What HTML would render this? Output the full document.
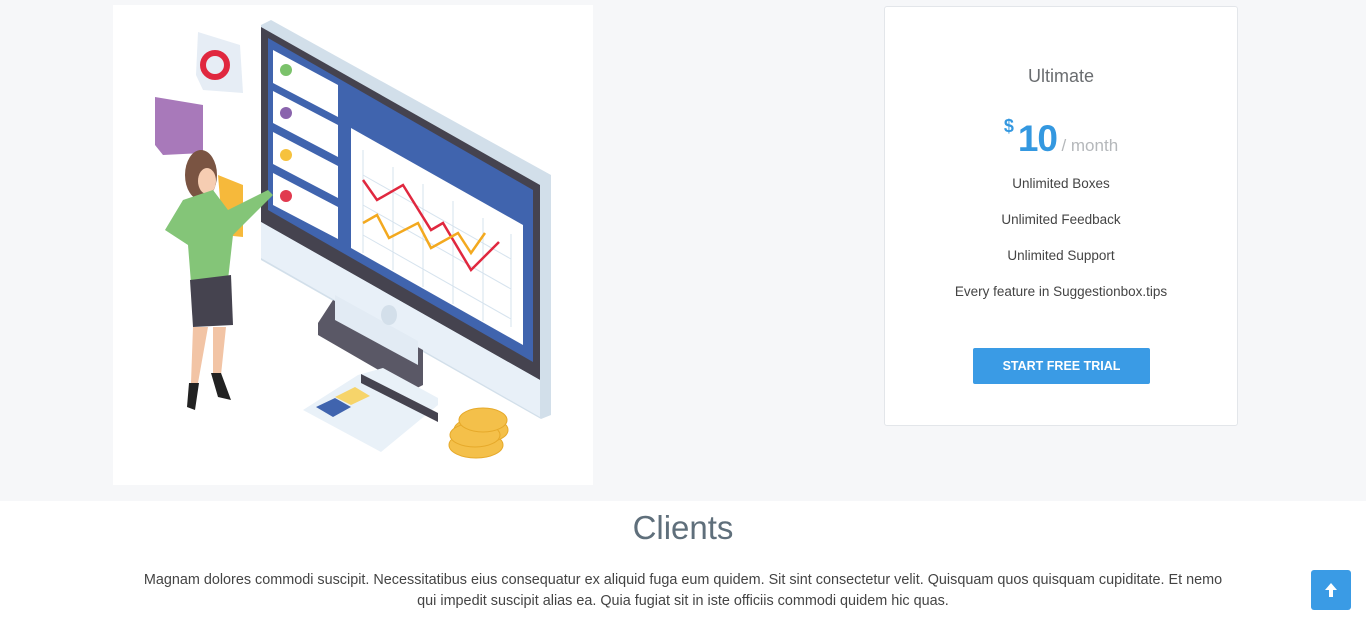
<!DOCTYPE html>
<html><head><style>
body{margin:0;width:1366px;height:625px;overflow:hidden;font-family:"Liberation Sans",sans-serif;background:#fff;position:relative}
.top{position:absolute;left:0;top:0;width:1366px;height:501px;background:#f6f7f9}
.img{position:absolute;left:113px;top:5px;width:480px;height:480px;background:#fff}
.card{position:absolute;left:884px;top:6px;width:352px;height:418px;background:#fff;border:1px solid #e3e6ea;border-radius:3px;text-align:center;color:#444}
.card h3{margin:0;position:absolute;top:59px;width:100%;font-weight:normal;font-size:18px;color:#6a6d70}
.price{position:absolute;top:111px;width:100%;color:#3498e0;font-weight:bold}
.price .d{font-size:18px;vertical-align:top;position:relative;top:-2px;margin-right:4px}
.price .n{font-size:37px;letter-spacing:-1px}
.price .m{font-size:17px;color:#b5b8bb;font-weight:normal}
.f{position:absolute;width:100%;font-size:13.5px;color:#444}
.btn{position:absolute;left:88px;top:341px;width:177px;height:36px;background:#3a9be5;border-radius:2px;color:#fff;font-weight:bold;font-size:12.5px;line-height:36px}
h2{position:absolute;top:509px;width:100%;margin:0;text-align:center;font-weight:normal;font-size:33px;color:#5f6f7b}
p{position:absolute;left:80px;width:1206px;top:570px;margin:0;text-align:center;font-size:14.4px;line-height:21px;color:#444}
.up{position:absolute;left:1311px;top:570px;width:40px;height:40px;background:#3a9be5;border-radius:3px}
</style></head><body>
<div class="top"></div>
<div class="img"><svg width="480" height="480" viewBox="0 0 480 480">
<polygon points="158,15 438,170 438,410 428,414 148,255 148,20" fill="#d2dfea"/>
<polygon points="148,22 427,180 427,375 148,217" fill="#45434f"/>
<polygon points="155,33 420,185 420,357 155,205" fill="#4064ae"/>
<polygon points="148,217 427,375 427,412 148,253" fill="#e8f0f8"/>
<polygon points="238,123 410,220 410,340 238,243" fill="#fff"/>
<g stroke="#d6e3ee" stroke-width="1">
<line x1="250" y1="145" x2="250" y2="248"/><line x1="280" y1="162" x2="280" y2="265"/><line x1="310" y1="179" x2="310" y2="282"/><line x1="340" y1="196" x2="340" y2="299"/><line x1="370" y1="213" x2="370" y2="316"/><line x1="398" y1="229" x2="398" y2="322"/>
<line x1="250" y1="170" x2="398" y2="254"/><line x1="250" y1="200" x2="398" y2="284"/><line x1="250" y1="230" x2="398" y2="314"/></g>
<polyline points="250,175 264,195 290,180 318,225 330,218 358,265 386,237" fill="none" stroke="#e0283f" stroke-width="2.5"/>
<polyline points="250,218 264,210 276,233 305,218 318,243 345,228 358,248 372,228" fill="none" stroke="#f3a91f" stroke-width="2.5"/>
<g fill="#fff"><polygon points="160,45 225,80 225,112 160,78"/><polygon points="160,86 225,120 225,152 160,118"/><polygon points="160,127 225,161 225,193 160,159"/><polygon points="160,168 225,202 225,234 160,200"/></g>
<circle cx="173" cy="65" r="6" fill="#7bc26b"/><circle cx="173" cy="108" r="6" fill="#8a64ad"/><circle cx="173" cy="150" r="6" fill="#f6c23e"/><circle cx="173" cy="191" r="6" fill="#e13a4f"/>
<polygon points="220,295 310,345 310,380 300,385 205,330 205,318" fill="#5a5866"/>
<polygon points="222,290 305,336 305,360 222,315" fill="#e2ebf4"/>
<ellipse cx="276" cy="310" rx="8" ry="10" fill="#d3dfea"/>
<polygon points="245,370 270,363 325,393 325,400 268,447 190,405" fill="#e9f1f8"/>
<polygon points="248,369 325,408 325,417 248,378" fill="#45434f"/>
<polygon points="203,402 222,393 238,402 220,412" fill="#4064ae"/><polygon points="222,392 242,382 257,391 238,400" fill="#f6d46a"/>
<g fill="#f4c04a" stroke="#e6a92a"><ellipse cx="363" cy="440" rx="27" ry="13"/><ellipse cx="368" cy="425" rx="27" ry="13"/><ellipse cx="362" cy="430" rx="25" ry="12"/><ellipse cx="370" cy="415" rx="24" ry="12"/></g>
<polygon points="85,27 127,40 130,88 90,85 83,70" fill="#e6edf5"/>
<circle cx="102" cy="60" r="12" fill="none" stroke="#e0283f" stroke-width="6"/>
<polygon points="42,92 90,100 90,148 50,150 42,140" fill="#a879ba"/>
<polygon points="105,170 130,180 130,232 110,230" fill="#f6b93b"/>
<ellipse cx="88" cy="170" rx="16" ry="25" fill="#7a5442"/>
<ellipse cx="94" cy="176" rx="9" ry="13" fill="#f6cdb2"/>
<path d="M70,195 L100,185 L115,205 L155,185 L160,190 L120,230 L115,275 L78,278 L75,240 L52,225 Z" fill="#84c578"/>
<path d="M77,275 L118,270 L120,320 L80,322 Z" fill="#45434f"/>
<path d="M80,322 L95,322 L85,378 L78,378 Z M100,322 L113,322 L108,370 L100,370 Z" fill="#f2c4a5"/>
<path d="M76,378 L86,378 L82,405 L74,402 Z M98,368 L108,368 L118,395 L105,392 Z" fill="#222"/>
</svg></div>
<div class="card">
<h3>Ultimate</h3>
<div class="price"><span class="d">$</span><span class="n">10</span> <span class="m">/ month</span></div>
<div class="f" style="top:169px">Unlimited Boxes</div>
<div class="f" style="top:205px">Unlimited Feedback</div>
<div class="f" style="top:241px">Unlimited Support</div>
<div class="f" style="top:277px">Every feature in Suggestionbox.tips</div>
<div class="btn">START FREE TRIAL</div>
</div>
<h2>Clients</h2>
<p>Magnam dolores commodi suscipit. Necessitatibus eius consequatur ex aliquid fuga eum quidem. Sit sint consectetur velit. Quisquam quos quisquam cupiditate. Et nemo<br>qui impedit suscipit alias ea. Quia fugiat sit in iste officiis commodi quidem hic quas.</p>
<div class="up"><svg width="40" height="40"><path d="M20 13 L26 20 H22 V27 H18 V20 H14 Z" fill="#fff"/></svg></div>
</body></html>
